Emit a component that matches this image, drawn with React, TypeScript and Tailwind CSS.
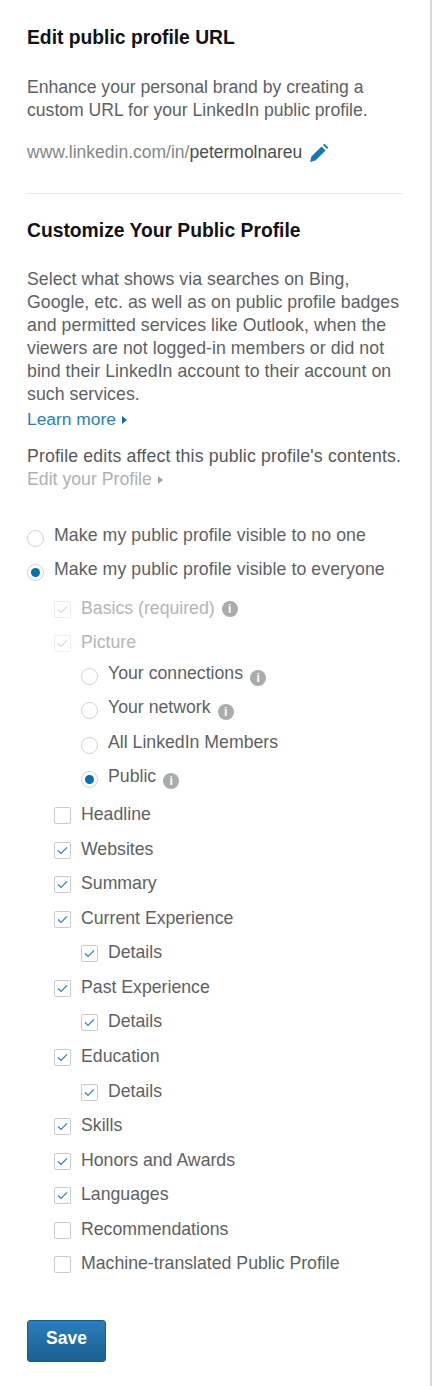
const font = { fontFamily: '"Liberation Sans", Arial, sans-serif' }

const Check = ({ on, faded }: { on?: boolean; faded?: boolean }) => (
	<span className={`flex items-center justify-center w-[17px] h-[17px] shrink-0 rounded-[2px] border bg-white ${faded ? "border-[#eceded]" : "border-[#c9cbcc]"}`}>
		{on && (
			<svg width="11" height="9" viewBox="0 0 11 9" fill="none">
				<path d="M1 4.6 L4 7.4 L10 1.4" stroke={faded ? "#c6dfee" : "#2b86bd"} strokeWidth="1.3" />
			</svg>
		)}
	</span>
)

const Radio = ({ on, indent }: { on?: boolean; indent?: boolean }) => (
	<span className={`flex items-center justify-center w-[17px] h-[17px] shrink-0 rounded-full border border-[#cfd0d1] bg-white ${indent ? "mt-[6px]" : "mt-[5px]"}`}>
		{on && <span className="w-[9px] h-[9px] rounded-full bg-[#0073b1]" />}
	</span>
)

const Info = () => (
	<span className="inline-flex items-center justify-center w-4 h-4 shrink-0 rounded-full bg-[#a9abad] text-white text-[12px] leading-none font-bold ml-[-3px]">i</span>
)

const Arrow = ({ color }: { color: string }) => (
	<svg width="5" height="8" viewBox="0 0 5 8" className="inline-block ml-[6px]">
		<path d="M0 0 L5 4 L0 8 Z" fill={color} />
	</svg>
)

const CheckRow = ({ label, on, indent, faded, info }: {
	label: string
	on?: boolean
	indent?: boolean
	faded?: boolean
	info?: boolean
}) => (
	<div className={`flex items-center h-[34.55px] gap-[10px] ${indent ? "pl-[81px]" : "pl-[54px]"}`}>
		<Check on={on} faded={faded} />
		<span className={`-mt-[2px] ${faded ? "text-[#b3b6b9]" : "text-[#5e6164]"}`}>{label}</span>
		{info && <Info />}
	</div>
)

const RadioRow = ({ label, on, info, indent }: {
	label: string
	on?: boolean
	info?: boolean
	indent?: boolean
}) => (
	<div className={`flex items-start h-[34.4px] gap-[10px] text-[#5e6164] ${indent ? "pl-[81px]" : "pl-[27px]"}`}>
		<Radio on={on} indent={indent} />
		<span className={`leading-[23px] ${indent ? "mt-0" : "-mt-[1px] tracking-[0.08px]"}`}>{label}</span>
		{info && <span className="mt-[3px] h-4"><Info /></span>}
	</div>
)

export default function App() {
	return (
		<div style={font} className="w-[432px] h-[1386px] bg-white border-r-2 border-[#d9d9d9] text-[17.7px] leading-[23px] text-[#5e6164] overflow-hidden">
			<div className="pl-[27px] pr-[27px] pt-[26px]">
				<h2 className="text-[19.3px] leading-[23px] font-bold text-[#111315]">Edit public profile URL</h2>
				<p className="mt-[27px] text-[17.6px]">Enhance your personal brand by creating a<br />custom URL for your LinkedIn public profile.</p>
				<div className="flex items-center mt-[19px] h-[23px] text-[17.5px]">
					<span className="text-[#83868a]">www.linkedin.com/in/</span>
					<span className="text-[#4a4d50]">petermolnareu</span>
					<svg width="20" height="20" viewBox="0 0 20 20" className="ml-[7px]">
						<path d="M1 19 L2.4 13.6 L12.6 3.4 L16.6 7.4 L6.4 17.6 Z M14 2 L15.4 0.8 L19.2 4.6 L18 6 Z" fill="#0f78b8" />
					</svg>
				</div>
				<div className="mt-[29px] h-px bg-[#e9e9e9]" />
				<h2 className="mt-[25px] text-[19.3px] leading-[23px] font-bold text-[#111315]">Customize Your Public Profile</h2>
				<p className="mt-[26px] whitespace-nowrap tracking-[0.05px]">
					Select what shows via searches on Bing,<br />
					Google, etc. as well as on public profile badges<br />
					and permitted services like Outlook, when the<br />
					viewers are not logged-in members or did not<br />
					bind their LinkedIn account to their account on<br />
					such services.
				</p>
				<div className="mt-[2px] text-[17.4px] text-[#1a84bc]">Learn more<Arrow color="#0b6ea8" /></div>
				<p className="mt-[14px] text-[#55585b] whitespace-nowrap tracking-[0.16px]">Profile edits affect this public profile's contents.</p>
				<div className="text-[#aeb1b4]">Edit your Profile<Arrow color="#a0a3a6" /></div>
			</div>
			<div className="mt-[34px]">
				<RadioRow label="Make my public profile visible to no one" />
				<RadioRow label="Make my public profile visible to everyone" on />
				<div className="-mt-[2px]">
					<CheckRow label="Basics (required)" on faded info />
					<CheckRow label="Picture" on faded />
				</div>
				<div className="mt-[1px]">
					<RadioRow label="Your connections" info indent />
					<RadioRow label="Your network" info indent />
					<RadioRow label="All LinkedIn Members" indent />
					<RadioRow label="Public" on info indent />
				</div>
				<div className="-mt-[1px]">
					<CheckRow label="Headline" />
					<CheckRow label="Websites" on />
					<CheckRow label="Summary" on />
					<CheckRow label="Current Experience" on />
					<CheckRow label="Details" on indent />
					<CheckRow label="Past Experience" on />
					<CheckRow label="Details" on indent />
					<CheckRow label="Education" on />
					<CheckRow label="Details" on indent />
					<CheckRow label="Skills" on />
					<CheckRow label="Honors and Awards" on />
					<CheckRow label="Languages" on />
					<CheckRow label="Recommendations" />
					<CheckRow label="Machine-translated Public Profile" />
				</div>
			</div>
			<button className="block ml-[27px] mt-[38px] w-[79px] h-[42px] pb-[5px] rounded-[3px] border border-[#175d8d] bg-gradient-to-b from-[#2a7fbd] to-[#1b5f92] text-white text-[17.5px] font-bold">Save</button>
		</div>
	)
}
